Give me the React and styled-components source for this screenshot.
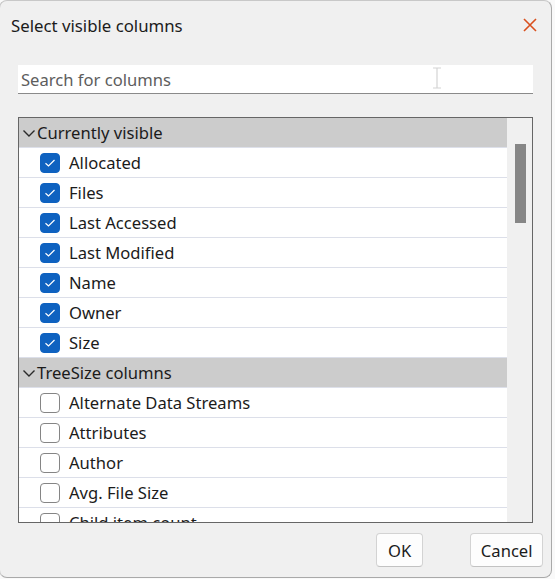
import React from 'react';
import styled, { createGlobalStyle } from 'styled-components';

const GlobalStyle = createGlobalStyle`
  html, body {
    margin: 0;
    padding: 0;
    background: #f9f9f9;
  }
  body {
    font-family: "Noto Sans", "Open Sans", sans-serif;
    color: #1b1b1b;
  }
`;

const groups = [
  {
    title: 'Currently visible',
    items: [
      ['Allocated', true],
      ['Files', true],
      ['Last Accessed', true],
      ['Last Modified', true],
      ['Name', true],
      ['Owner', true],
      ['Size', true],
    ],
  },
  {
    title: 'TreeSize columns',
    items: [
      ['Alternate Data Streams', false],
      ['Attributes', false],
      ['Author', false],
      ['Avg. File Size', false],
      ['Child item count', false],
    ],
  },
];

const Window = styled.div`
  box-sizing: border-box;
  width: 553px;
  height: 578px;
  background: #f0f0f0;
  border: 1px solid #a9a9a9;
  border-left-color: #c8c8c8;
  border-top-color: #c8c8c8;
  border-radius: 8px;
  display: flex;
  flex-direction: column;
  margin-left: -1px;
`;

const TitleBar = styled.div`
  height: 50px;
  display: flex;
  align-items: center;
  justify-content: space-between;
  padding: 0 12px 0 11px;
`;

const Title = styled.div`
  font-size: 16.8px;
  color: #1b1b1b;
  margin-top: -1px;
`;

const CloseBtn = styled.div`
  width: 18px;
  height: 18px;
  display: flex;
  align-items: center;
  justify-content: center;
  margin-top: -2px;
`;

const Body = styled.div`
  padding: 14px 18px 0 18px;
  display: flex;
  flex-direction: column;
  flex: 1;
`;

const SearchBox = styled.div`
  position: relative;
  height: 28px;
  background: #ffffff;
  border-bottom: 1px solid #8a8a8a;
  display: flex;
  align-items: center;
  padding-left: 3px;
  font-size: 16.6px;
  color: #5d5d5d;
`;

const Cursor = styled.div`
  position: absolute;
  left: 414px;
  top: 2px;
`;

const ListBox = styled.div`
  margin-top: 23px;
  height: 406px;
  box-sizing: border-box;
  border: 1px solid #666666;
  display: flex;
  background: #ffffff;
  overflow: hidden;
`;

const Rows = styled.div`
  flex: 1;
  overflow: hidden;
`;

const GroupHeader = styled.div`
  height: 30px;
  background: #cccccc;
  display: flex;
  align-items: center;
  padding-left: 3px;
  font-size: 16.6px;
  color: #1b1b1b;
  gap: 1px;
  border-bottom: 1px solid #dde0ea;
  box-sizing: border-box;
`;

const Row = styled.div`
  height: 30px;
  box-sizing: border-box;
  border-bottom: 1px solid #dcdfe9;
  display: flex;
  align-items: center;
  padding-left: 21px;
  gap: 9px;
  font-size: 16.6px;
  color: #1b1b1b;
`;

const Box = styled.div`
  width: 20px;
  height: 20px;
  box-sizing: border-box;
  border-radius: 4px;
  display: flex;
  align-items: center;
  justify-content: center;
  background: ${(p) => (p.checked ? '#0f62c0' : '#ffffff')};
  border: 1px solid ${(p) => (p.checked ? '#0f62c0' : '#858585')};
`;

const ScrollTrack = styled.div`
  width: 25px;
  background: #f0f0f0;
  padding: 26px 6px 0 8px;
  box-sizing: border-box;
`;

const Thumb = styled.div`
  width: 11px;
  height: 79px;
  background: #868686;
`;

const Footer = styled.div`
  display: flex;
  justify-content: flex-end;
  gap: 47px;
  padding: 10px 8px 0 0;
  margin-right: -18px;
`;

const Button = styled.div`
  height: 34px;
  box-sizing: border-box;
  padding: 0 ${(p) => p.pad}px;
  background: #fdfdfd;
  border: 1px solid #d3d3d3;
  border-bottom-color: #c2c2c2;
  border-radius: 4px;
  display: flex;
  align-items: center;
  font-size: 16.6px;
  color: #1b1b1b;
`;

const Chevron = () => (
  <svg width="14" height="14" viewBox="0 0 14 14">
    <path d="M1.5 4.5 L7 10 L12.5 4.5" fill="none" stroke="#2a2a2a" strokeWidth="1.4" />
  </svg>
);

const Check = () => (
  <svg width="12" height="10" viewBox="0 0 12 10">
    <path d="M1.5 5.2 L4.5 8 L10.5 2" fill="none" stroke="#fff" strokeWidth="1.2" />
  </svg>
);

export default function App() {
  return (
    <>
      <GlobalStyle />
      <Window>
        <TitleBar>
          <Title>Select visible columns</Title>
          <CloseBtn>
            <svg width="16" height="16" viewBox="0 0 16 16">
              <path d="M2 2 L14 14 M14 2 L2 14" stroke="#d9501e" strokeWidth="1.6" />
            </svg>
          </CloseBtn>
        </TitleBar>
        <Body>
          <SearchBox>
            Search for columns
            <Cursor>
              <svg width="10" height="22" viewBox="0 0 10 22">
                <path d="M1 1 H9 M5 1 V21 M1 21 H9" stroke="#d4d4d4" strokeWidth="1.2" fill="none" />
              </svg>
            </Cursor>
          </SearchBox>
          <ListBox>
            <Rows>
              {groups.map((g) => (
                <React.Fragment key={g.title}>
                  <GroupHeader>
                    <Chevron />
                    {g.title}
                  </GroupHeader>
                  {g.items.map(([name, checked]) => (
                    <Row key={name}>
                      <Box checked={checked}>{checked && <Check />}</Box>
                      {name}
                    </Row>
                  ))}
                </React.Fragment>
              ))}
            </Rows>
            <ScrollTrack>
              <Thumb />
            </ScrollTrack>
          </ListBox>
          <Footer>
            <Button pad={11}>OK</Button>
            <Button pad={9.5}>Cancel</Button>
          </Footer>
        </Body>
      </Window>
    </>
  );
}
